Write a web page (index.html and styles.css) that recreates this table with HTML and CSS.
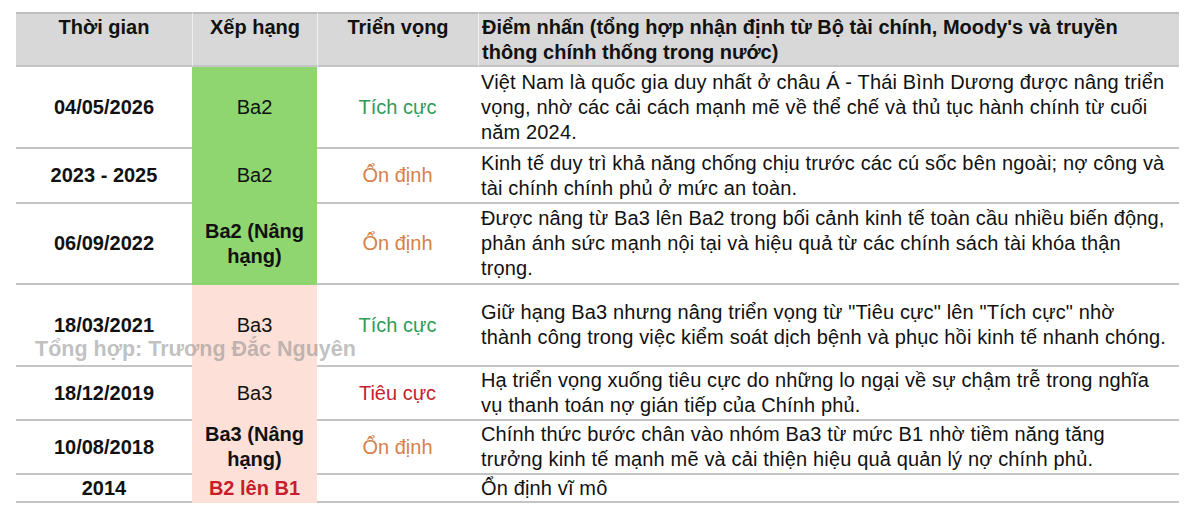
FILE: index.html
```html
<!DOCTYPE html>
<html lang="vi">
<head>
<meta charset="utf-8">
<title>Xếp hạng tín nhiệm Moody's</title>
<link rel="stylesheet" href="styles.css">
</head>
<body>
<div class="wrap">
  <table class="ratings">
    <colgroup>
      <col class="c-time">
      <col class="c-rank">
      <col class="c-outlook">
      <col class="c-note">
    </colgroup>
    <thead>
      <tr class="h-head">
        <th class="center">Thời gian</th>
        <th class="center">Xếp hạng</th>
        <th class="center">Triển vọng</th>
        <th class="left">Điểm nhấn (tổng hợp nhận định từ Bộ tài chính, Moody's và truyền thông chính thống trong nước)</th>
      </tr>
    </thead>
    <tbody>
      <tr class="h-82">
        <td class="time">04/05/2026</td>
        <td class="rank green">Ba2</td>
        <td class="outlook pos">Tích cực</td>
        <td class="note">Việt Nam là quốc gia duy nhất ở châu Á - Thái Bình Dương được nâng triển vọng, nhờ các cải cách mạnh mẽ về thể chế và thủ tục hành chính từ cuối năm 2024.</td>
      </tr>
      <tr class="h-55">
        <td class="time">2023 - 2025</td>
        <td class="rank green">Ba2</td>
        <td class="outlook stable">Ổn định</td>
        <td class="note">Kinh tế duy trì khả năng chống chịu trước các cú sốc bên ngoài; nợ công và tài chính chính phủ ở mức an toàn.</td>
      </tr>
      <tr class="h-81">
        <td class="time">06/09/2022</td>
        <td class="rank green bold">Ba2 (Nâng hạng)</td>
        <td class="outlook stable">Ổn định</td>
        <td class="note">Được nâng từ Ba3 lên Ba2 trong bối cảnh kinh tế toàn cầu nhiều biến động, phản ánh sức mạnh nội tại và hiệu quả từ các chính sách tài khóa thận trọng.</td>
      </tr>
      <tr class="h-82">
        <td class="time">18/03/2021</td>
        <td class="rank pink">Ba3</td>
        <td class="outlook pos">Tích cực</td>
        <td class="note">Giữ hạng Ba3 nhưng nâng triển vọng từ "Tiêu cực" lên "Tích cực" nhờ<br>thành công trong việc kiểm soát dịch bệnh và phục hồi kinh tế nhanh chóng.</td>
      </tr>
      <tr class="h-54">
        <td class="time">18/12/2019</td>
        <td class="rank pink">Ba3</td>
        <td class="outlook neg">Tiêu cực</td>
        <td class="note">Hạ triển vọng xuống tiêu cực do những lo ngại về sự chậm trễ trong nghĩa<br>vụ thanh toán nợ gián tiếp của Chính phủ.</td>
      </tr>
      <tr class="h-54">
        <td class="time">10/08/2018</td>
        <td class="rank pink bold">Ba3 (Nâng hạng)</td>
        <td class="outlook stable">Ổn định</td>
        <td class="note">Chính thức bước chân vào nhóm Ba3 từ mức B1 nhờ tiềm năng tăng<br>trưởng kinh tế mạnh mẽ và cải thiện hiệu quả quản lý nợ chính phủ.</td>
      </tr>
      <tr class="h-28">
        <td class="time">2014</td>
        <td class="rank pink bold red">B2 lên B1</td>
        <td class="outlook"></td>
        <td class="note">Ổn định vĩ mô</td>
      </tr>
    </tbody>
  </table>
  <div class="watermark">Tổng hợp: Trương Đắc Nguyên</div>
</div>
</body>
</html>
```
FILE: styles.css
```css
html, body {
  margin: 0;
  padding: 0;
  background: #ffffff;
}
body {
  font-family: "Liberation Sans", Arial, Helvetica, sans-serif;
  color: #111111;
}
.wrap {
  position: relative;
  padding: 12px 0 0 16px;
  width: 1163px;
}
.ratings {
  border-collapse: separate;
  border-spacing: 0;
  table-layout: fixed;
  width: 1163px;
  font-size: 20px;
  line-height: 25px;
}
.c-time { width: 176px; }
.c-rank { width: 125px; }
.c-outlook { width: 161px; }
.c-note { width: 701px; }

th {
  background: #d8d8d8;
  font-weight: bold;
  vertical-align: top;
  padding: 1px 3px 0 3px;
  border-top: 2px solid #bdbdbd;
  border-bottom: 2px solid #c4c4c4;
  border-left: 1px solid #efefef;
}
th:first-child { border-left: none; }
th.center { text-align: center; }
th.left { text-align: left; }

.h-head { height: 54px; }
.h-82 { height: 82px; }
.h-81 { height: 81px; }
.h-55 { height: 55px; }
.h-54 { height: 54px; }
.h-28 { height: 28px; }

td {
  vertical-align: middle;
  padding: 0 3px;
  border-bottom: 2px solid #c4c4c4;
}
td.time {
  text-align: center;
  font-weight: bold;
}
td.rank {
  text-align: center;
  padding: 0 2px;
}
td.green {
  background: #8fd670;
  border-bottom-color: #8fd670;
}
td.pink {
  background: #fde1d8;
  border-bottom-color: #fde1d8;
}
td.bold { font-weight: bold; }
td.red { color: #c81e2c; }
td.outlook { text-align: center; }
td.pos { color: #2f9c58; }
td.stable { color: #d7804a; }
td.neg { color: #c41f2d; }
td.note {
  text-align: left;
  letter-spacing: 0.15px;
  padding-right: 2px;
}

.watermark {
  position: absolute;
  left: 35px;
  top: 337px;
  font-size: 21.5px;
  font-weight: bold;
  color: rgba(140, 140, 140, 0.55);
  white-space: nowrap;
}
```
